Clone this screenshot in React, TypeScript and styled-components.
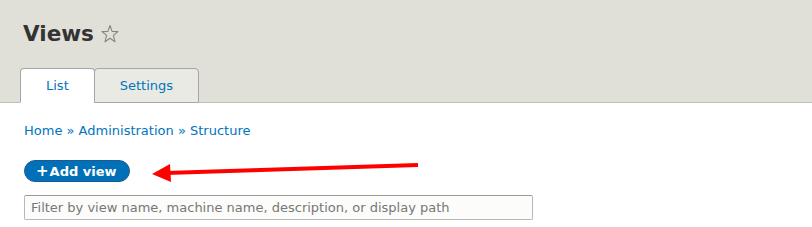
import React from 'react'
import styled, { createGlobalStyle } from 'styled-components'

const GlobalStyle = createGlobalStyle`
  html, body {
    margin: 0;
    padding: 0;
    background: #ffffff;
  }
  body {
    font-family: 'DejaVu Sans', 'Liberation Sans', sans-serif;
    font-size: 13px;
    color: #333333;
  }
`

const Page = styled.div`
  position: relative;
  width: 812px;
  height: 227px;
  overflow: hidden;
`

const Header = styled.header`
  background: #e0e0d8;
  border-bottom: 1px solid #bfbfba;
  padding: 18px 0 0 20px;
  height: 84px;
  display: flex;
  flex-direction: column;
  justify-content: space-between;
`

const TitleRow = styled.div`
  display: flex;
  align-items: center;
  gap: 7px;
  padding-left: 3px;
`

const Title = styled.h1`
  margin: 0;
  font-size: 21.5px;
  font-weight: 700;
  line-height: 32px;
  color: #333333;
`

const Tabs = styled.nav`
  display: flex;
  margin-bottom: -1px;
`

const Tab = styled.a<{ $active?: boolean }>`
  display: block;
  height: 33px;
  line-height: 34px;
  padding: 0 25px;
  margin-right: -1px;
  background: ${({ $active }) => ($active ? '#ffffff' : '#eaeae4')};
  border: 1px solid #a6a6a6;
  border-bottom-color: ${({ $active }) => ($active ? '#ffffff' : '#a6a6a6')};
  border-radius: 4px 4px 0 0;
  color: #0074bd;
  font-size: 13px;
  text-decoration: none;
`

const Content = styled.main`
  padding: 18px 24px 0 24px;
`

const Breadcrumb = styled.div`
  font-size: 13px;
  line-height: 20px;
  color: #0074bd;
  margin-bottom: 19px;
`

const Crumb = styled.a`
  color: #0074bd;
  text-decoration: none;
`

const AddButton = styled.a`
  display: inline-flex;
  align-items: center;
  white-space: nowrap;
  height: 22px;
  padding: 0 12px 0 11px;
  box-sizing: border-box;
  background: #0071b8;
  border: 1px solid #1e5c90;
  border-radius: 11px;
  color: #ffffff;
  font-weight: 700;
  font-size: 13px;
  text-decoration: none;
`

const Plus = styled.span`
  margin-right: 1px;
  font-size: 15px;
  line-height: 1;
`

const FilterInput = styled.input`
  display: block;
  margin-top: 13px;
  width: 509px;
  height: 25px;
  box-sizing: border-box;
  padding: 2px 6px;
  border: 1px solid #b8b8b8;
  border-top-color: #999999;
  border-radius: 2px;
  background: #fcfcfa;
  font-family: 'DejaVu Sans', sans-serif;
  font-size: 13px;
  color: #333333;

  &::placeholder {
    color: #777777;
  }
`

const Arrow = styled.svg`
  position: absolute;
  left: 0;
  top: 0;
  pointer-events: none;
`

const StarIcon = () => (
  <svg width="18" height="20" viewBox="0 0 18 20">
    <path
      d="M9 1.5 L11.1 7.4 L17 7.6 L12.4 11.4 L14 17.8 L9 14.3 L4 17.8 L5.6 11.4 L1 7.6 L6.9 7.4 Z"
      fill="none"
      stroke="#868679"
      strokeWidth="1.1"
      strokeLinejoin="round"
    />
  </svg>
)

export default function App() {
  return (
    <Page>
      <GlobalStyle />
      <Header>
        <TitleRow>
          <Title>Views</Title>
          <StarIcon />
        </TitleRow>
        <Tabs>
          <Tab $active href="#">List</Tab>
          <Tab href="#">Settings</Tab>
        </Tabs>
      </Header>
      <Content>
        <Breadcrumb>
          <Crumb href="#">Home</Crumb> » <Crumb href="#">Administration</Crumb> »{' '}
          <Crumb href="#">Structure</Crumb>
        </Breadcrumb>
        <AddButton href="#">
          <Plus>+</Plus>Add view
        </AddButton>
        <FilterInput placeholder="Filter by view name, machine name, description, or display path" />
      </Content>
      <Arrow width="812" height="227">
        <line x1="418" y1="165" x2="166" y2="173" stroke="#ff0000" strokeWidth="4" />
        <polygon points="152,174 170,164 171,182" fill="#ff0000" />
      </Arrow>
    </Page>
  )
}
